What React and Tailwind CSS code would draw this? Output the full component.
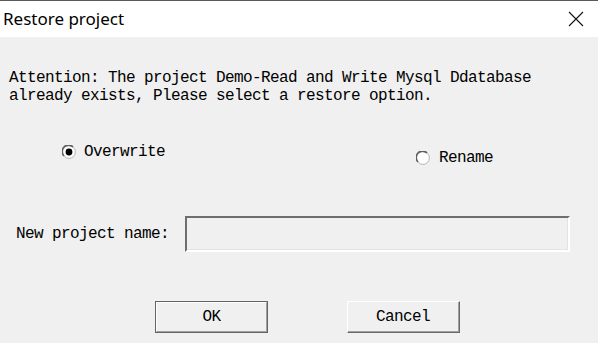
import React from 'react';

const mono = { fontFamily: '"Liberation Mono", "DejaVu Sans Mono", monospace' };

const Radio = ({ checked }) => (
  <svg width="14" height="14" viewBox="0 0 14 14" className="shrink-0">
    <circle cx="7" cy="7" r="6.4" fill="#fff" stroke="#b4b4b4" strokeWidth="1" />
    <path d="M2 11 A6.3 6.3 0 0 1 11 2" fill="none" stroke="#5f5f5f" strokeWidth="1.6" />
    {checked && <circle cx="7" cy="7" r="3.4" fill="#000" />}
  </svg>
);

const App = () => {
  return (
    <div className="w-[598px] h-[343px] bg-[#f0f0f0] flex flex-col overflow-hidden" style={mono}>
      {/* title bar */}
      <div className="h-[37px] bg-white border-t border-[#5a5a5a] flex items-center justify-between shrink-0">
        <span className="pl-[3px] pb-[1px] text-[17px] text-black" style={{ fontFamily: '"Noto Sans", "Open Sans", sans-serif' }}>
          Restore project
        </span>
        <svg width="16" height="16" viewBox="0 0 16 16" className="mr-[14px]">
          <path d="M1 1 L15 15 M15 1 L1 15" stroke="#111" strokeWidth="1.1" />
        </svg>
      </div>

      {/* body */}
      <div className="flex flex-col text-[16px] tracking-[-0.6px] text-black leading-[18px]">
        <div className="pl-[9px] pt-[32px]">
          <div>Attention: The project Demo-Read and Write Mysql Ddatabase</div>
          <div>already exists, Please select a restore option.</div>
        </div>

        <div className="flex items-start mt-[38px]">
          <div className="flex items-center gap-[8px] ml-[62px]">
            <Radio checked />
            <span>Overwrite</span>
          </div>
          <div className="flex items-center gap-[9px] ml-[251px] mt-[6px]">
            <Radio />
            <span>Rename</span>
          </div>
        </div>

        <div className="flex items-center mt-[49px]">
          <span className="pl-[16px] w-[185px]">New project name:</span>
          <div className="w-[385px] h-[36px] border-2 border-t-[#6e6e6e] border-l-[#6e6e6e] border-b-[#fff] border-r-[#fff] bg-[#f0f0f0]">
            <div className="w-full h-full border-b border-r border-[#e3e3e3]" />
          </div>
        </div>

        <div className="flex mt-[49px]">
          <button className="ml-[155px] w-[113px] h-[32px] border border-[#646464] bg-[#f0f0f0] p-0" style={mono}>
            <div className="w-full h-full flex items-center justify-center border border-t-white border-l-white border-b-[#a0a0a0] border-r-[#a0a0a0] text-[16px] tracking-[-0.6px]">
              OK
            </div>
          </button>
          <button className="ml-[79px] w-[113px] h-[32px] bg-[#f0f0f0] p-0 border border-t-white border-l-white border-b-[#696969] border-r-[#696969]" style={mono}>
            <div className="w-full h-full flex items-center justify-center border-b border-r border-[#a0a0a0] text-[16px] tracking-[-0.6px]">
              Cancel
            </div>
          </button>
        </div>
      </div>
    </div>
  );
};

export default App;
